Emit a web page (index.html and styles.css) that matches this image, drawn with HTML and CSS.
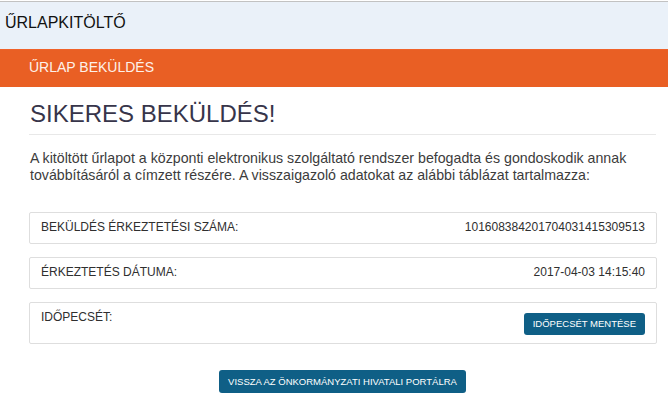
FILE: index.html
```html
<!DOCTYPE html>
<html lang="hu">
<head>
  <meta charset="UTF-8">
  <title>Űrlapkitöltő</title>
  <meta name="viewport" content="width=device-width, initial-scale=1.0">
  <link rel="stylesheet" href="styles.css">
</head>
<body>
  <div class="app-header">ŰRLAPKITÖLTŐ</div>
  <div class="page-title">ŰRLAP BEKÜLDÉS</div>

  <div class="content">
    <h1 class="result-title">SIKERES BEKÜLDÉS!</h1>
    <p class="result-text">A kitöltött űrlapot a központi elektronikus szolgáltató rendszer befogadta és gondoskodik annak továbbításáról a címzett részére. A visszaigazoló adatokat az alábbi táblázat tartalmazza:</p>

    <div class="info-row">
      <span class="info-label">BEKÜLDÉS ÉRKEZTETÉSI SZÁMA:</span>
      <span class="info-value">101608384201704031415309513</span>
    </div>
    <div class="info-row">
      <span class="info-label">ÉRKEZTETÉS DÁTUMA:</span>
      <span class="info-value">2017-04-03 14:15:40</span>
    </div>
    <div class="info-row">
      <span class="info-label">IDŐPECSÉT:</span>
      <a href="#" class="btn btn-stamp">IDŐPECSÉT MENTÉSE</a>
    </div>

    <div class="back-wrap">
      <a href="#" class="btn btn-back">VISSZA AZ ÖNKORMÁNYZATI HIVATALI PORTÁLRA</a>
    </div>
  </div>
</body>
</html>
```

FILE: styles.css
```css
body {
  font-family: "Liberation Sans", Arial, sans-serif;
  margin: 0;
  background: #fff;
  color: #333;
}
.app-header {
  margin-top: 1px;
  border-top: 1px solid #c2c2c2;
  background: #eaf1f9;
  height: 48px;
  box-sizing: border-box;
  padding: 12px 5px 0;
  font-size: 16px;
  line-height: 18px;
  color: #111;
}
.page-title {
  background: #e95f24;
  border-top: 1px solid #f0622a;
  padding: 9px 29px 11px;
  font-size: 14px;
  line-height: 17px;
  color: #fdf1ea;
}
.content {
  margin: 0 12px 0 29px;
}
.result-title {
  margin: 13px 0 0;
  padding: 0 0 6px 1px;
  font-size: 24px;
  line-height: 28px;
  font-weight: normal;
  color: #37354a;
  border-bottom: 1px solid #e8e8e8;
}
.result-text {
  margin: 15px 0 0 1px;
  font-size: 14.2px;
  line-height: 17px;
  color: #3c3c3c;
}
.info-row {
  display: flex;
  justify-content: space-between;
  align-items: flex-start;
  margin-top: 13px;
  padding: 7px 11px 8px;
  border: 1px solid #dedede;
  border-radius: 2px;
  font-size: 12px;
  line-height: 15px;
  color: #2f2f2f;
  width: 604px;
}
.result-text + .info-row {
  margin-top: 28px;
}
.btn {
  display: inline-block;
  background: #0f5f86;
  color: #fff;
  text-decoration: none;
  border-radius: 3px;
  font-size: 9.5px;
  line-height: 22px;
  padding: 0 9px;
}
.btn-stamp {
  margin-top: 3px;
}
.back-wrap {
  text-align: center;
  margin-top: 26px;
}
.btn-back {
  line-height: 23px;
}
```
